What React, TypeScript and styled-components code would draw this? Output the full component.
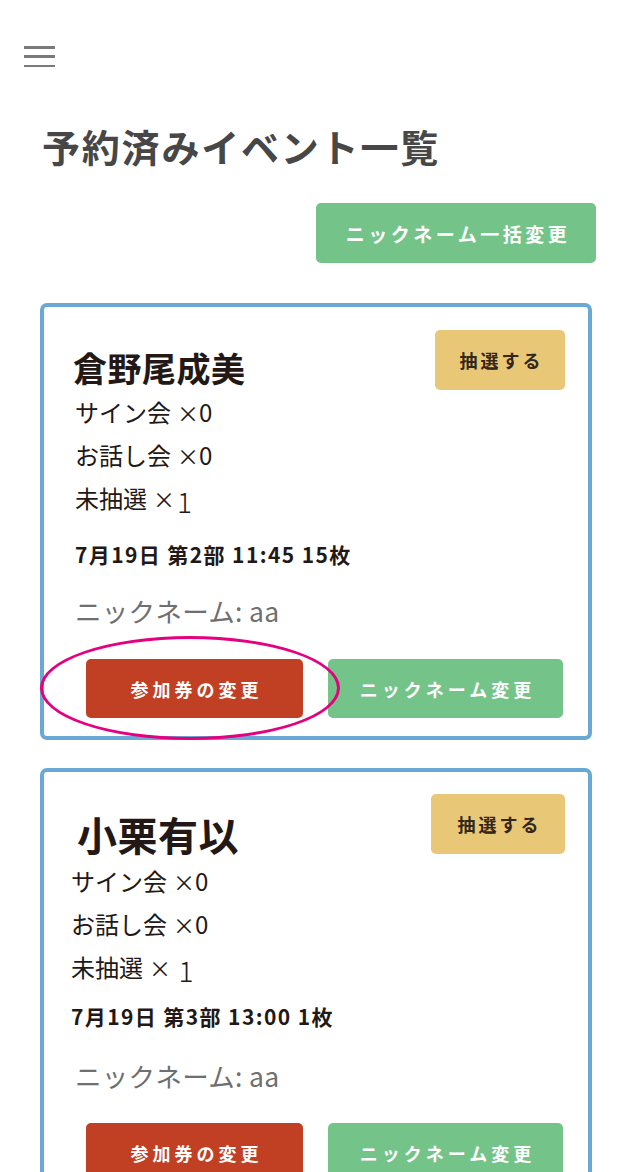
import React from "react";
import styled, { createGlobalStyle } from "styled-components";

const GlobalStyle = createGlobalStyle`
  html, body {
    margin: 0;
    padding: 0;
    background: #ffffff;
  }
  body {
    font-family: "Noto Sans CJK JP", "Noto Sans", sans-serif;
    color: #231815;
  }
  * {
    box-sizing: border-box;
  }
`;

const Page = styled.div`
  width: 632px;
  padding: 46px 40px 0 40px;
  display: flex;
  flex-direction: column;
`;

const MenuButton = styled.button`
  width: 31px;
  height: 21px;
  margin-left: -16px;
  padding: 0;
  border: 0;
  background: none;
  display: flex;
  flex-direction: column;
  justify-content: space-between;
`;

const MenuLine = styled.span`
  display: block;
  height: 2.5px;
  background: #7a7a7a;
`;

const Title = styled.h1`
  margin: 54px 0 0 2px;
  height: 50px;
  font-size: 38px;
  line-height: 50px;
  font-weight: 700;
  letter-spacing: 1.8px;
  color: #474747;
`;

const Toolbar = styled.div`
  display: flex;
  justify-content: flex-end;
  margin: 32px -4px 0 0;
`;

type Tone = "green" | "red" | "yellow";

const toneColors: Record<Tone, { bg: string; fg: string }> = {
  green: { bg: "#74c388", fg: "#ffffff" },
  red: { bg: "#c13f23", fg: "#ffffff" },
  yellow: { bg: "#e8c776", fg: "#33261a" },
};

const ActionButton = styled.button<{ $tone: Tone; $width: number; $height?: number }>`
  width: ${(p) => p.$width}px;
  height: ${(p) => p.$height ?? 59}px;
  flex: none;
  border: 0;
  border-radius: 5px;
  background: ${(p) => toneColors[p.$tone].bg};
  color: ${(p) => toneColors[p.$tone].fg};
  font-family: "Noto Sans CJK JP", "Noto Sans", sans-serif;
  font-weight: 700;
  font-size: 18px;
  letter-spacing: ${(p) => (p.$tone === "yellow" ? 3 : 4)}px;
  padding: 0 0 0 ${(p) => (p.$tone === "yellow" ? 3 : 4)}px;
  display: flex;
  align-items: center;
  justify-content: center;
`;

const HeaderButton = styled(ActionButton)`
  font-size: 19px;
  letter-spacing: 3.5px;
  padding-left: 4px;
`;

const CardList = styled.div`
  display: flex;
  flex-direction: column;
  gap: 28px;
  margin-top: 40px;
`;

type CardLayout = {
  nameSize: number;
  nameTop: number;
  nameIndent: number;
  listTop: number;
  indent: number;
  dateTop: number;
  nickTop: number;
  nickIndent: number;
  actionsTop: number;
  drawTop: number;
  drawWidth: number;
};

const Card = styled.section<{ $top: number }>`
  border: 4px solid #68a9d6;
  border-radius: 7px;
  padding: ${(p) => p.$top}px 23px 18px 29px;
  display: flex;
  flex-direction: column;
`;

const CardHead = styled.div`
  display: flex;
  justify-content: space-between;
  align-items: flex-start;
  height: 60px;
`;

const MemberName = styled.h2<{ $size: number; $top: number; $indent: number }>`
  margin: ${(p) => p.$top}px 0 0 ${(p) => p.$indent}px;
  height: ${(p) => p.$size}px;
  font-size: ${(p) => p.$size}px;
  line-height: ${(p) => p.$size}px;
  font-weight: 700;
  letter-spacing: 0.5px;
  color: #231815;
`;

const CountList = styled.ul<{ $top: number; $indent: number }>`
  list-style: none;
  margin: ${(p) => p.$top}px 0 0 ${(p) => p.$indent}px;
  padding: 0;
`;

const CountItem = styled.li`
  height: 43px;
  font-size: 24px;
  line-height: 43px;
  color: #231815;
`;

const Times = styled.span`
  margin-left: 6px;
  font-size: 22px;
`;

const LoneDigit = styled.span`
  display: inline-block;
  font-size: 28px;
  font-weight: 300;
  line-height: 0;
  vertical-align: -5px;
  margin-left: 2px;
`;

const SlotInfo = styled.p<{ $top: number; $indent: number }>`
  margin: ${(p) => p.$top}px 0 0 ${(p) => p.$indent}px;
  height: 36px;
  font-size: 21px;
  line-height: 36px;
  font-weight: 700;
  letter-spacing: 1.4px;
  color: #231815;
`;

const Nickname = styled.p<{ $top: number; $indent: number }>`
  margin: ${(p) => p.$top}px 0 0 ${(p) => p.$indent}px;
  height: 40px;
  font-size: 26.5px;
  line-height: 40px;
  letter-spacing: 0.3px;
  color: #6f6f6f;
`;

const Actions = styled.div<{ $top: number }>`
  display: flex;
  gap: 25px;
  margin: ${(p) => p.$top}px 0 0 13px;
`;

const Highlighted = styled.div`
  position: relative;
  flex: none;
`;

const HighlightRing = styled.span`
  position: absolute;
  left: -46px;
  top: -23px;
  width: 300px;
  height: 104px;
  border: 3px solid #e4007f;
  border-radius: 50%;
  pointer-events: none;
`;

type Reservation = {
  name: string;
  slot: string;
  nickname: string;
  lotteryGap: boolean;
  highlighted: boolean;
  layout: CardLayout;
};

const reservations: Reservation[] = [
  {
    name: "倉野尾成美",
    slot: "7月19日 第2部 11:45 15枚",
    nickname: "aa",
    lotteryGap: false,
    highlighted: true,
    layout: {
      nameSize: 34,
      nameTop: 21,
      nameIndent: 0,
      listTop: 0,
      indent: 2,
      dateTop: 17,
      nickTop: 19,
      nickIndent: 2,
      actionsTop: 28,
      drawTop: 23,
      drawWidth: 130,
    },
  },
  {
    name: "小栗有以",
    slot: "7月19日 第3部 13:00 1枚",
    nickname: "aa",
    lotteryGap: true,
    highlighted: false,
    layout: {
      nameSize: 40,
      nameTop: 20,
      nameIndent: 4,
      listTop: 5,
      indent: -2,
      dateTop: 10,
      nickTop: 22,
      nickIndent: 2,
      actionsTop: 27,
      drawTop: 22,
      drawWidth: 134,
    },
  },
];

function ReservationCard({ r }: { r: Reservation }) {
  const l = r.layout;
  const changeTicket = (
    <ActionButton $tone="red" $width={217}>
      参加券の変更
    </ActionButton>
  );
  return (
    <Card $top={l.drawTop}>
      <CardHead>
        <MemberName $size={l.nameSize} $top={l.nameTop} $indent={l.nameIndent}>
          {r.name}
        </MemberName>
        <ActionButton $tone="yellow" $width={l.drawWidth} $height={60}>
          抽選する
        </ActionButton>
      </CardHead>
      <CountList $top={l.listTop} $indent={l.indent}>
        <CountItem>
          サイン会<Times>×</Times>0
        </CountItem>
        <CountItem>
          お話し会<Times>×</Times>0
        </CountItem>
        <CountItem>
          未抽選<Times>×</Times>
          {r.lotteryGap ? " " : ""}
          <LoneDigit>1</LoneDigit>
        </CountItem>
      </CountList>
      <SlotInfo $top={l.dateTop} $indent={l.indent}>
        {r.slot}
      </SlotInfo>
      <Nickname $top={l.nickTop} $indent={l.nickIndent}>
        ニックネーム: {r.nickname}
      </Nickname>
      <Actions $top={l.actionsTop}>
        {r.highlighted ? (
          <Highlighted>
            {changeTicket}
            <HighlightRing />
          </Highlighted>
        ) : (
          changeTicket
        )}
        <ActionButton $tone="green" $width={235}>
          ニックネーム変更
        </ActionButton>
      </Actions>
    </Card>
  );
}

export default function App() {
  return (
    <>
      <GlobalStyle />
      <Page>
        <MenuButton aria-label="メニュー">
          <MenuLine />
          <MenuLine />
          <MenuLine />
        </MenuButton>
        <Title>予約済みイベント一覧</Title>
        <Toolbar>
          <HeaderButton $tone="green" $width={280} $height={60}>
            ニックネーム一括変更
          </HeaderButton>
        </Toolbar>
        <CardList>
          {reservations.map((r) => (
            <ReservationCard key={r.name} r={r} />
          ))}
        </CardList>
      </Page>
    </>
  );
}
